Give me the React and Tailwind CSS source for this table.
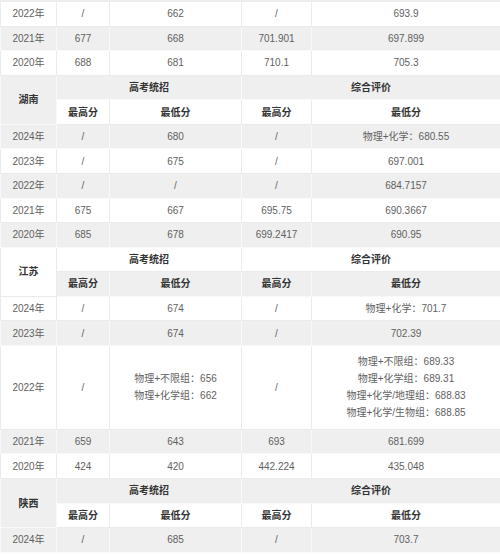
import React from 'react';

const top = [
    ['2022年', '/', '662', '/', '693.9'],
    ['2021年', '677', '668', '701.901', '697.899'],
    ['2020年', '688', '681', '710.1', '705.3'],
];

const provinces = [
    {
        name: '湖南',
        rows: [
            ['2024年', '/', '680', '/', '物理+化学：680.55'],
            ['2023年', '/', '675', '/', '697.001'],
            ['2022年', '/', '/', '/', '684.7157'],
            ['2021年', '675', '667', '695.75', '690.3667'],
            ['2020年', '685', '678', '699.2417', '690.95'],
        ],
    },
    {
        name: '江苏',
        rows: [
            ['2024年', '/', '674', '/', '物理+化学：701.7'],
            ['2023年', '/', '674', '/', '702.39'],
            [
                '2022年',
                '/',
                ['物理+不限组：656', '物理+化学组：662'],
                '/',
                ['物理+不限组：689.33', '物理+化学组：689.31', '物理+化学/地理组：688.83', '物理+化学/生物组：688.85'],
            ],
            ['2021年', '659', '643', '693', '681.699'],
            ['2020年', '424', '420', '442.224', '435.048'],
        ],
    },
    {
        name: '陕西',
        rows: [['2024年', '/', '685', '/', '703.7']],
    },
];

const grayCell = 'bg-[#efefef] border border-[#f9f9f9]';
const whiteCell = 'bg-white border border-[#ebebeb]';

const Cell = ({ gray, bold, children, ...rest }) => (
    <td
        {...rest}
        className={`${gray ? grayCell : whiteCell} h-[24.57px] p-0 text-center align-middle ${
            bold ? 'font-bold text-[#333]' : 'text-[#5f5f5f]'
        }`}
    >
        {children}
    </td>
);

const App = () => {
    let stripe = 0;
    const next = () => stripe++ % 2 === 1;

    const dataRow = (row, key) => {
        const gray = next();
        const tall = Array.isArray(row[4]);
        return (
            <tr key={key} className={tall ? 'h-[84px]' : ''}>
                {row.map((v, i) => (
                    <Cell key={i} gray={gray}>
                        {Array.isArray(v) ? (
                            <div className="flex flex-col items-center leading-[17px]">
                                {v.map((line) => (
                                    <span key={line}>{line}</span>
                                ))}
                            </div>
                        ) : (
                            v
                        )}
                    </Cell>
                ))}
            </tr>
        );
    };

    return (
        <div
            className="w-[500px] bg-white text-[10px]"
            style={{ fontFamily: '"Liberation Sans", "Noto Sans CJK SC", sans-serif' }}
        >
            {/* sliver of the row above */}
            <div className="h-px bg-[#efefef]" />
            <table className="w-[500px] table-fixed border-collapse">
                <colgroup>
                    <col className="w-[56px]" />
                    <col className="w-[53px]" />
                    <col className="w-[132px]" />
                    <col className="w-[70px]" />
                    <col className="w-[189px]" />
                </colgroup>
                <tbody>
                    {top.map((row, i) => dataRow(row, 'top' + i))}
                    {provinces.map((p) => {
                        const headGray = next();
                        const subGray = next();
                        return (
                            <React.Fragment key={p.name}>
                                <tr>
                                    <Cell gray={headGray} bold rowSpan={2}>
                                        {p.name}
                                    </Cell>
                                    <Cell gray={headGray} bold colSpan={2}>
                                        高考统招
                                    </Cell>
                                    <Cell gray={headGray} bold colSpan={2}>
                                        综合评价
                                    </Cell>
                                </tr>
                                <tr>
                                    <Cell gray={subGray} bold>最高分</Cell>
                                    <Cell gray={subGray} bold>最低分</Cell>
                                    <Cell gray={subGray} bold>最高分</Cell>
                                    <Cell gray={subGray} bold>最低分</Cell>
                                </tr>
                                {p.rows.map((row, i) => dataRow(row, p.name + i))}
                            </React.Fragment>
                        );
                    })}
                </tbody>
            </table>
        </div>
    );
};

export default App;
